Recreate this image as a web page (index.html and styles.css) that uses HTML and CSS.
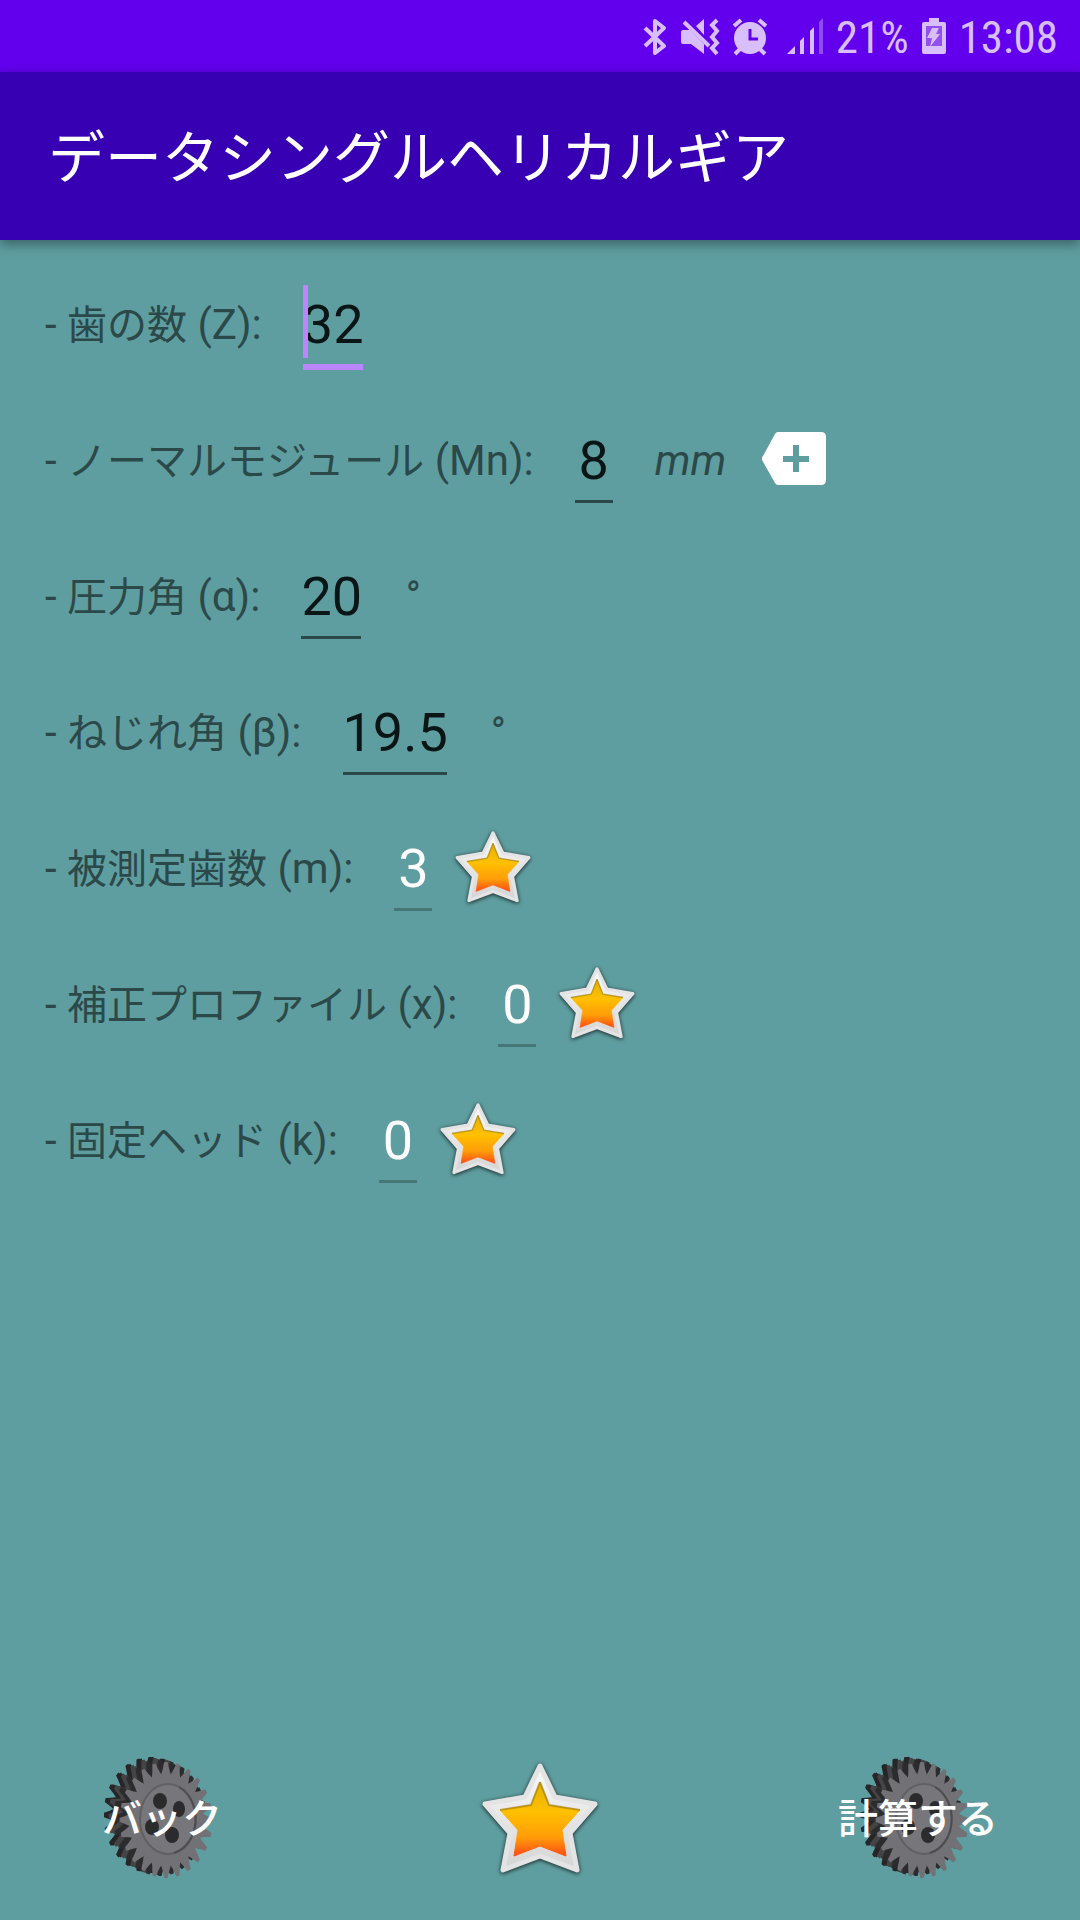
FILE: index.html
```html
<!DOCTYPE html>
<html lang="ja">
<head>
<meta charset="utf-8">
<meta name="viewport" content="width=device-width">
<title>データシングルヘリカルギア</title>
<link rel="stylesheet" href="styles.css">
</head>
<body>
<svg class="defs" aria-hidden="true">
  <defs>
    <linearGradient id="gold" x1="0" y1="0" x2="0" y2="1">
      <stop offset="0" stop-color="#e0b000"/>
      <stop offset=".4" stop-color="#ffc000"/>
      <stop offset=".75" stop-color="#ff9c08"/>
      <stop offset="1" stop-color="#ff4a14"/>
    </linearGradient>
    <linearGradient id="silver" x1="0" y1="0" x2="0" y2="1">
      <stop offset="0" stop-color="#fafafa"/>
      <stop offset="1" stop-color="#d4d4d4"/>
    </linearGradient>
    <symbol id="star" viewBox="0 0 120 120">
      <path d="M60 6 75 37 115 44 90 73 97 110 60 96 23 110 30 73 5 44 45 37Z" fill="url(#silver)" stroke="#e4e4e4" stroke-width="5" stroke-linejoin="round"/>
      <path d="M60 22 69 45 100 50 82 70 86 96 60 86 34 96 38 70 20 50 51 45Z" fill="url(#gold)" stroke="url(#gold)" stroke-width="1" stroke-linejoin="round"/>
      <path d="M60 22 69 45 100 50M60 22 51 45 20 50" fill="none" stroke="#8a6a10" stroke-opacity=".5" stroke-width="2"/>
    </symbol>
    <path id="t1" d="M-7-43Q-4-50-2-58H2Q4-50 7-43Z"/>
    <g id="t3"><use href="#t1"/><use href="#t1" transform="rotate(15)"/><use href="#t1" transform="rotate(30)"/></g>
    <g id="t6"><use href="#t3"/><use href="#t3" transform="rotate(45)"/></g>
    <g id="t12"><use href="#t6"/><use href="#t6" transform="rotate(90)"/></g>
    <g id="cog"><circle r="45"/><use href="#t12"/><use href="#t12" transform="rotate(180)"/></g>
    <symbol id="gear" viewBox="0 0 112 124">
      <g fill="#262628"><use href="#cog" transform="translate(46 59) scale(.8 1)"/><use href="#cog" transform="translate(48 59) scale(.8 1)"/></g>
      <g fill="#444447"><use href="#cog" transform="translate(51 60) scale(.8 1)"/><use href="#cog" transform="translate(54 61) scale(.8 1)"/></g>
      <use href="#cog" transform="translate(56 62) scale(.8 1)" fill="#2c2c2e"/>
      <use href="#cog" transform="translate(62 64) scale(.8 1)" fill="#727176"/>
      <ellipse cx="64" cy="63" rx="28" ry="35" fill="#77767b" stroke="#606064" stroke-width="2"/>
      <path d="M75 31A28 35 0 0 1 70 97" fill="none" stroke="#4d4d50" stroke-width="2"/>
      <g fill="#2b2b2d"><ellipse cx="56" cy="45" rx="7" ry="8"/><ellipse cx="75" cy="53" rx="6" ry="8"/><ellipse cx="48" cy="71" rx="7" ry="8"/><ellipse cx="68" cy="79" rx="7" ry="8"/></g>
    </symbol>
  </defs>
</svg>

<div class="status-bar">
  <svg class="status-icon" width="26" height="40" viewBox="0 0 26 40"><path d="M3 11 22 29 13 36V4L22 11 3 29" fill="none" stroke="currentColor" stroke-width="4" stroke-linejoin="round"/></svg>
  <svg class="status-icon" width="40" height="40" viewBox="0 0 40 40" fill="currentColor"><path d="M3 13H10L24 27V37L11 27H3Q1 27 1 25V15Q1 13 3 13ZM16 9 24 2V18Z"/><path d="M4 5 29 29" stroke="currentColor" stroke-width="4"/><path d="M37 3 32 8 37 14 32 20 37 26 32 31 37 37" fill="none" stroke="currentColor" stroke-width="4"/></svg>
  <svg class="status-icon" width="36" height="40" viewBox="0 0 36 40"><circle cx="18" cy="21" r="16" fill="currentColor"/><path d="M2 9 9 3M27 3 34 9M8 32 3 37M28 32 33 37" stroke="currentColor" stroke-width="4"/><path d="M18 12V22H26" fill="none" stroke="#6200ee" stroke-width="3"/></svg>
  <svg class="status-icon signal" width="38" height="40" viewBox="0 0 38 40" fill="currentColor"><path d="M1 37 9 29V37ZM14 37V24L18 20V37ZM24 37V14L28 10V37Z"/><path d="M33 37V5L37 1V37Z" opacity=".4"/></svg>
  <span>21%</span>
  <svg class="status-icon" width="26" height="40" viewBox="0 0 26 40"><path d="M8 1H18V5H23Q25 5 25 7V35Q25 37 23 37H3Q1 37 1 35V7Q1 5 3 5H8Z" fill="currentColor"/><path d="M5 9H21V29H5Z" fill="#9250ef"/><path d="M11 11H18L15 17H19L9 30 11 21H6Z" fill="currentColor"/></svg>
  <time>13:08</time>
</div>

<header class="app-bar"><h1>データシングルヘリカルギア</h1></header>

<main>
  <form class="fields">
    <div class="row">
      <label for="z">- <span class="ja">歯の数</span> (Z):</label>
      <span class="focused"><input class="two" id="z" value="32"></span>
    </div>
    <div class="row">
      <label for="mn">- <span class="ja">ノーマルモジュール</span> (Mn):</label>
      <input class="one" id="mn" value="8">
      <span class="unit">mm</span>
      <button class="add" type="button" aria-label="追加">
        <svg width="64" height="53" viewBox="0 0 64 53"><path d="M16 0H59Q64 0 64 5V48Q64 53 59 53H16Q14 53 13 51L0 28Q-1 26 1 24L13 2Q14 0 16 0Z" fill="#fff"/><path d="M21 27H47M34 13V40" stroke="#5f9ea0" stroke-width="6"/></svg>
      </button>
    </div>
    <div class="row">
      <label for="alpha">- <span class="ja">圧力角</span> (α):</label>
      <input class="two" id="alpha" value="20">
      <span class="unit">°</span>
    </div>
    <div class="row">
      <label for="beta">- <span class="ja">ねじれ角</span> (β):</label>
      <input class="four" id="beta" value="19.5">
      <span class="unit">°</span>
    </div>
    <div class="row">
      <label for="m">- <span class="ja">被測定歯数</span> (m):</label>
      <input class="one locked" id="m" value="3" readonly>
      <svg class="star"><use href="#star"/></svg>
    </div>
    <div class="row">
      <label for="x">- <span class="ja">補正プロファイル</span> (x):</label>
      <input class="one locked" id="x" value="0" readonly>
      <svg class="star"><use href="#star"/></svg>
    </div>
    <div class="row">
      <label for="k">- <span class="ja">固定ヘッド</span> (k):</label>
      <input class="one locked" id="k" value="0" readonly>
      <svg class="star"><use href="#star"/></svg>
    </div>
  </form>
</main>

<footer class="actions">
  <button class="action" type="button"><svg class="gear"><use href="#gear"/></svg><span>バック</span></button>
  <button class="action" type="button" aria-label="プレミアム"><svg class="star large"><use href="#star"/></svg></button>
  <button class="action" type="button"><svg class="gear"><use href="#gear"/></svg><span>計算する</span></button>
</footer>
</body>
</html>
```
FILE: styles.css
```css
* { box-sizing: border-box; }

body {
  margin: 0;
  min-height: 100vh;
  display: flex;
  flex-direction: column;
  background: #5f9ea0;
  color: #2c494a;
  font-family: Roboto, "Noto Sans CJK JP", sans-serif;
  font-size: 42px;
}

svg { display: block; flex: none; }
.defs { position: absolute; width: 0; height: 0; }

button {
  padding: 0;
  border: 0;
  background: none;
  color: inherit;
  font: inherit;
}

.status-bar {
  height: 72px;
  padding: 4px 22px 0 0;
  display: flex;
  align-items: center;
  justify-content: flex-end;
  gap: 12px;
  background: #6200ee;
  color: #d8bffb;
  font-family: "Roboto Condensed", Roboto, sans-serif;
  font-size: 45px;
  line-height: 64px;
}
.status-icon { margin-bottom: 2px; }
.signal { margin-left: 6px; }

.app-bar {
  height: 168px;
  padding: 6px 48px 0;
  display: flex;
  align-items: center;
  background: #3700b3;
  color: #fff;
  box-shadow: 0 4px 12px rgba(0, 0, 0, .4);
}
.app-bar h1 {
  margin: 0;
  font-size: 57px;
  font-weight: 400;
  line-height: 84px;
}

main { flex: 1; padding: 45px; }
.fields { display: flex; flex-direction: column; gap: 54px; }
.row { height: 82px; display: flex; align-items: flex-start; }
.row label, .unit { line-height: 79px; white-space: nowrap; }
.ja { font-size: 40px; }
.unit { font-style: italic; }

input {
  height: 82px;
  margin: 0 42px 0 41px;
  padding: 0;
  border: 0;
  border-bottom: 3px solid #2c494a;
  outline: 0;
  background: none;
  color: #0a1616;
  font: inherit;
  font-size: 54px;
  line-height: 79px;
  text-align: center;
}
.one { width: 38px; }
.two { width: 60px; }
.four { width: 104px; }
.locked { margin-right: 22px; border-color: #467677; color: #fff; }

.focused { position: relative; display: flex; }
.focused input { height: 85px; border-bottom: 6px solid #bb86fc; }
.focused::before {
  content: "";
  position: absolute;
  left: 41px;
  top: 0;
  width: 5px;
  height: 73px;
  background: #bb86fc;
}

.add { margin: 11px 0 0 36px; }
.star {
  width: 78px;
  height: 78px;
  filter: drop-shadow(0 1px 2px rgba(0, 0, 0, .8));
}

.actions {
  padding: 0 82px 40px;
  display: flex;
  justify-content: space-between;
}
.action {
  width: 160px;
  height: 124px;
  display: grid;
  place-items: center;
  color: #fff;
  font-size: 40px;
  font-weight: 500;
  line-height: 60px;
  white-space: nowrap;
}
.action > * { grid-area: 1 / 1; }
.action span { position: relative; padding-top: 4px; }
.gear { width: 112px; height: 124px; margin-right: 4px; }
.large { width: 120px; height: 120px; margin-top: 4px; }
```
